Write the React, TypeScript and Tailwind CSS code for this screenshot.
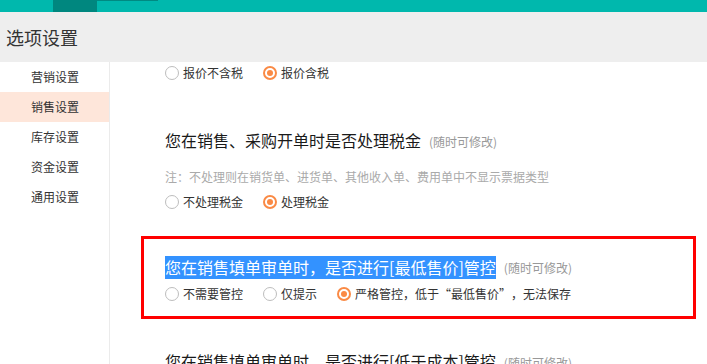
import React from "react";

const font = { fontFamily: '"Noto Sans CJK SC", "Microsoft YaHei", sans-serif' };

function Radio({ checked, label }: { checked?: boolean; label: React.ReactNode }) {
  return (
    <div className="flex items-center mr-[20px]">
      {checked ? (
        <span className="w-[14px] h-[14px] rounded-full border-2 border-[#fa8a45] flex items-center justify-center bg-white">
          <span className="w-[6px] h-[6px] rounded-full bg-[#fa8a45]" />
        </span>
      ) : (
        <span className="w-[14px] h-[14px] rounded-full border border-[#bdbdbd] bg-white" />
      )}
      <span className="ml-[4px] text-[12px] text-[#333] whitespace-nowrap">{label}</span>
    </div>
  );
}

function Dash() {
  return (
    <div className="h-px w-full bg-[linear-gradient(to_right,#c8cccc_3px,transparent_3px)] bg-[length:5px_1px]" />
  );
}

const Tip = () => <span className="ml-[8px] text-[12px] text-[#999] whitespace-nowrap">(随时可修改)</span>;

export default function App() {
  const items = ["营销设置", "销售设置", "库存设置", "资金设置", "通用设置"];
  return (
    <div lang="zh-CN" className="w-[707px] h-[364px] overflow-hidden bg-white flex flex-col" style={font}>
      <div className="h-[12px] bg-[#00b8ad] flex shrink-0">
        <div className="w-[53px]" />
        <div className="w-[44px] bg-[#00877f]" />
        <div className="w-[61px] border-t border-[#008a82]" />
      </div>
      <div className="h-[50px] bg-[#eeeeee] flex items-center pl-[6px] shrink-0">
        <span className="text-[18px] text-[#333] leading-none">选项设置</span>
      </div>
      <div className="flex flex-1 min-h-0">
        <div className="w-[110px] border-r border-[#ebebeb] shrink-0">
          {items.map((t, i) => (
            <div
              key={t}
              className={`h-[30px] flex items-center pl-[31px] text-[12px] text-[#333] ${i === 1 ? "bg-[#fee6da]" : ""}`}
            >
              {t}
            </div>
          ))}
        </div>
        <div className="flex-1 ml-[55px] flex flex-col">
          <div className="pt-[1px] pb-[22px]">
            <div className="h-[20px] flex items-center">
              <Radio label="报价不含税" />
              <Radio checked label="报价含税" />
            </div>
          </div>
          <Dash />
          <div className="pt-[23px] pb-[22px]">
            <div className="h-[24px] flex items-baseline leading-[24px]">
              <span className="text-[16px] text-[#1a1a1a]">您在销售、采购开单时是否处理税金</span>
              <Tip />
            </div>
            <div className="h-[20px] mt-[15px] flex items-center text-[12px] text-[#aaa]">
              注：不处理则在销货单、进货单、其他收入单、费用单中不显示票据类型
            </div>
            <div className="h-[20px] mt-[5px] flex items-center">
              <Radio label="不处理税金" />
              <Radio checked label="处理税金" />
            </div>
          </div>
          <Dash />
          <div className="relative pt-[22px] pb-[22px]">
            <div className="absolute left-[-24px] right-[11px] top-[2px] bottom-[7px] border-[3px] border-[#ff0000]" />
            <div className="h-[23px] flex items-center">
              <span className="text-[16px] leading-[23px] text-white bg-[#3392ff] whitespace-nowrap">
                您在销售填单审单时，是否进行[最低售价]管控
              </span>
              <Tip />
            </div>
            <div className="h-[20px] mt-[5px] flex items-center">
              <Radio label="不需要管控" />
              <Radio label="仅提示" />
              <Radio
                checked
                label={
                  <>
                    严格管控，低于<span className="inline-block w-[12px] text-right">“</span>最低售价
                    <span className="inline-block w-[12px]">”</span>，无法保存
                  </>
                }
              />
            </div>
          </div>
          <Dash />
          <div className="pt-[23px]">
            <div className="h-[24px] flex items-baseline leading-[24px]">
              <span className="text-[16px] text-[#1a1a1a] whitespace-nowrap">您在销售填单审单时，是否进行[低于成本]管控</span>
              <Tip />
            </div>
          </div>
        </div>
      </div>
    </div>
  );
}
